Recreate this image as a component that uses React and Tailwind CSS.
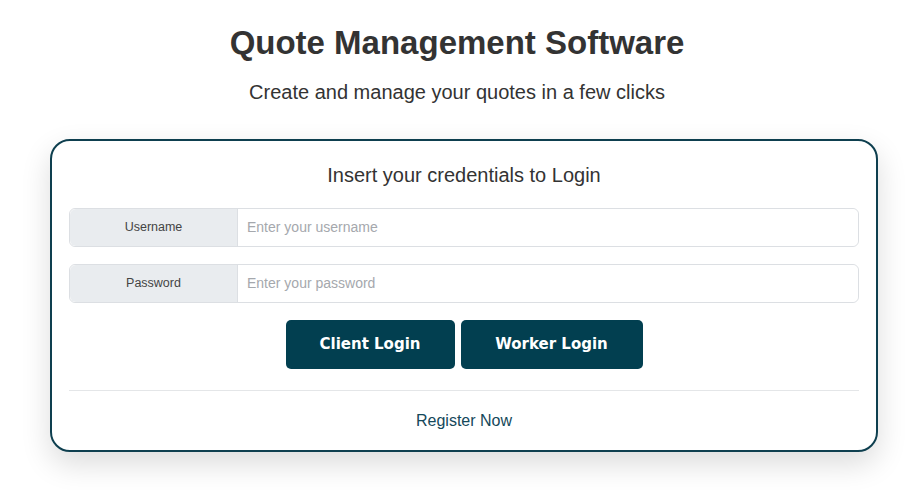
import React, { useState } from 'react';

export default function App() {
  const [username, setUsername] = useState('');
  const [password, setPassword] = useState('');

  return (
    <div className="min-h-[490px] bg-white pt-[24px] text-[#333]" style={{ fontFamily: '"Liberation Sans", Arial, sans-serif' }}>
      <h1 className="text-center text-[33px] font-bold leading-[38px]">Quote Management Software</h1>
      <p className="mt-[18px] text-center text-[20px] leading-[24px]">Create and manage your quotes in a few clicks</p>

      <div className="ml-[50px] mt-[35px] w-[828px] rounded-[20px] border-2 border-[#0e3f4f] bg-white px-[17px] pt-[22px] pb-[17px] shadow-[0_12px_30px_rgba(0,0,0,0.14)]">
        <h2 className="text-center text-[20px] leading-[24px]">Insert your credentials to Login</h2>

        <div className="mt-[21px] flex h-[39px] rounded-[6px] border border-[#dcdfe3]">
          <label className="flex w-[168px] items-center justify-center rounded-l-[6px] border-r border-[#dcdfe3] bg-[#e9ecef] text-[12.5px] text-[#444]">
            Username
          </label>
          <input
            type="text"
            value={username}
            onChange={(e) => setUsername(e.target.value)}
            placeholder="Enter your username"
            className="flex-1 rounded-r-[6px] bg-white px-[9px] text-[14px] outline-none placeholder:text-[#a5a8ad]"
          />
        </div>

        <div className="mt-[17px] flex h-[39px] rounded-[6px] border border-[#dcdfe3]">
          <label className="flex w-[168px] items-center justify-center rounded-l-[6px] border-r border-[#dcdfe3] bg-[#e9ecef] text-[12.5px] text-[#444]">
            Password
          </label>
          <input
            type="password"
            value={password}
            onChange={(e) => setPassword(e.target.value)}
            placeholder="Enter your password"
            className="flex-1 rounded-r-[6px] bg-white px-[9px] text-[14px] outline-none placeholder:text-[#a5a8ad]"
          />
        </div>

        <div className="mt-[17px] flex justify-center gap-[6px]">
          <button
            type="button"
            className="h-[49px] w-[169px] rounded-[5px] bg-[#023f50] text-[15px] font-bold text-white"
            style={{ fontFamily: '"DejaVu Sans", Verdana, sans-serif' }}
          >
            Client Login
          </button>
          <button
            type="button"
            className="h-[49px] w-[182px] rounded-[5px] bg-[#023f50] text-[15px] font-bold text-white"
            style={{ fontFamily: '"DejaVu Sans", Verdana, sans-serif' }}
          >
            Worker Login
          </button>
        </div>

        <div className="mt-[21px] border-t border-[#e4e6e8]" />

        <div className="pt-[18px] pb-[-1px] text-center">
          <a href="#" className="text-[16px] leading-[20px] text-[#14485a]">Register Now</a>
        </div>
      </div>
    </div>
  );
}
